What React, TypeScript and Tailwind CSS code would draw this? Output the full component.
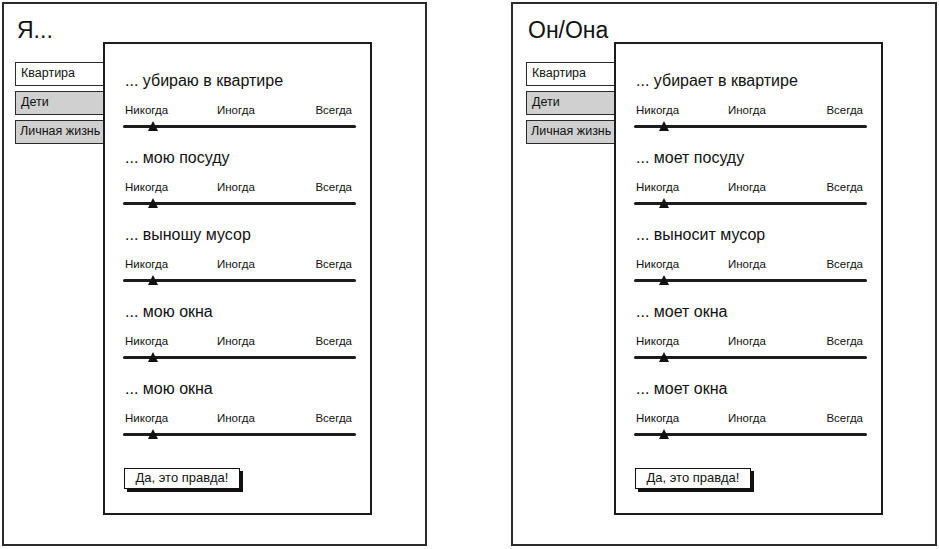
import React from "react";

const font = { fontFamily: '"Liberation Sans", Arial, sans-serif' };

function Row({ text }: { text: string }) {
  return (
    <div className="pl-[18px] pr-[14px] mb-[20px]">
      <div className="pl-[2px] h-[20px] leading-[20px] text-[16px] text-[#111] whitespace-nowrap">{text}</div>
      <div className="mt-[12px] pl-[2px] pr-[4px] h-[14px] leading-[14px] text-[11.5px] text-[#111] flex">
        <div className="w-[92px]">Никогда</div>
        <div>Иногда</div>
        <div className="ml-auto">Всегда</div>
      </div>
      <div className="mt-[8px] relative h-[3px] bg-[#1c1c1c] rounded-full">
        <svg
          className="absolute left-[25px] top-[-4px]"
          width="10"
          height="10"
          viewBox="0 0 10 10"
        >
          <polygon points="5,0 10,10 0,10" fill="#111" />
        </svg>
      </div>
    </div>
  );
}

function Frame({
  title,
  rows,
  second,
}: {
  title: string;
  rows: string[];
  second?: boolean;
}) {
  return (
    <div
      className={
        "h-[544px] border-2 border-[#2b2b2b] bg-white flex items-start " +
        (second ? "w-[426px] pl-[13px]" : "w-[425px] pl-[11px]")
      }
    >
      <div className="w-[88px] shrink-0">
        <div className="mt-[12px] pl-[2px] h-[28px] leading-[28px] text-[23px] text-[#111] whitespace-nowrap">
          {title}
        </div>
        <div className="mt-[18px] flex flex-col gap-[5px]">
          <div className="w-[96px] h-[24px] border-[1.5px] border-[#2b2b2b] bg-white pl-[5px] text-[12.5px] leading-[21px] text-[#111] whitespace-nowrap">
            Квартира
          </div>
          <div className="w-[96px] h-[24px] border-[1.5px] border-[#2b2b2b] bg-[#d0d0d0] pl-[5px] text-[12.5px] leading-[21px] text-[#111] whitespace-nowrap">
            Дети
          </div>
          <div className="w-[96px] h-[24px] border-[1.5px] border-[#2b2b2b] bg-[#d0d0d0] pl-[4px] text-[12.5px] leading-[21px] text-[#111] whitespace-nowrap">
            Личная жизнь
          </div>
        </div>
      </div>
      <div className="relative z-10 mt-[38px] w-[269px] h-[473px] border-2 border-[#1c1c1c] bg-white pt-[27px]">
        {rows.map((r, i) => (
          <Row key={i} text={r} />
        ))}
        <div className="ml-[19px] mt-[32px] w-[116px] h-[21px] border-[1.5px] border-[#111] bg-white shadow-[3px_3px_0_0_#111] text-[13px] leading-[18px] text-center text-[#111] whitespace-nowrap">
          Да, это правда!
        </div>
      </div>
    </div>
  );
}

export default function App() {
  return (
    <div className="w-[939px] h-[549px] bg-white flex pl-[2px] pt-[2px] gap-[84px]" style={font}>
      <Frame
        title="Я..."
        rows={[
          "... убираю в квартире",
          "... мою посуду",
          "... выношу мусор",
          "... мою окна",
          "... мою окна",
        ]}
      />
      <Frame
        title="Он/Она"
        second
        rows={[
          "... убирает в квартире",
          "... моет посуду",
          "... выносит мусор",
          "... моет окна",
          "... моет окна",
        ]}
      />
    </div>
  );
}
